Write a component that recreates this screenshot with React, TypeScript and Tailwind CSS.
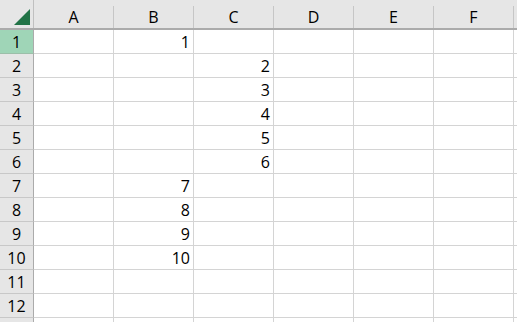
import React from "react";

const cols = ["A", "B", "C", "D", "E", "F", "G"];
const data: Record<number, Record<string, string>> = {
  1: { B: "1" },
  2: { C: "2" },
  3: { C: "3" },
  4: { C: "4" },
  5: { C: "5" },
  6: { C: "6" },
  7: { B: "7" },
  8: { B: "8" },
  9: { B: "9" },
  10: { B: "10" },
};
const rows = Array.from({ length: 13 }, (_, i) => i + 1);

export default function App() {
  return (
    <div
      className="w-[517px] h-[322px] overflow-hidden bg-white text-[16px] text-black"
      style={{ fontFamily: '"Open Sans", "Liberation Sans", sans-serif' }}
    >
      <div className="flex h-[30px] bg-[#e6e6e6] border-b-2 border-[#ababab]">
        <div className="w-[34px] shrink-0 h-full border-r border-[#c0c0c0] flex items-start justify-end pr-[3px] pt-[9px]">
          <svg width="16" height="16" viewBox="0 0 16 16">
            <polygon points="16,0 16,16 0,16" fill="#217346" />
          </svg>
        </div>
        {cols.map((c) => (
          <div key={c} className="w-[80px] shrink-0 h-full flex flex-col justify-end">
            <div className="h-[22px] border-r border-[#c6c6c6] flex items-center justify-center leading-none">
              {c === "G" ? "" : c}
            </div>
          </div>
        ))}
      </div>
      {rows.map((r) => (
        <div key={r} className="flex h-[24px]">
          <div
            className={`w-[34px] shrink-0 h-full border-r border-b flex items-center justify-center leading-none ${
              r === 1 ? "bg-[#9fd5b7] border-b-[#9cbfa9] border-r-[#ababab]" : "bg-[#e6e6e6] border-b-[#c8c8c8] border-r-[#ababab]"
            }`}
          >
            {r === 13 ? "" : r}
          </div>
          {cols.map((c) => (
            <div
              key={c}
              className="w-[80px] shrink-0 h-full border-r border-b border-[#d4d4d4] flex items-center justify-end pr-[3px] leading-none"
            >
              {data[r]?.[c] ?? ""}
            </div>
          ))}
        </div>
      ))}
    </div>
  );
}
